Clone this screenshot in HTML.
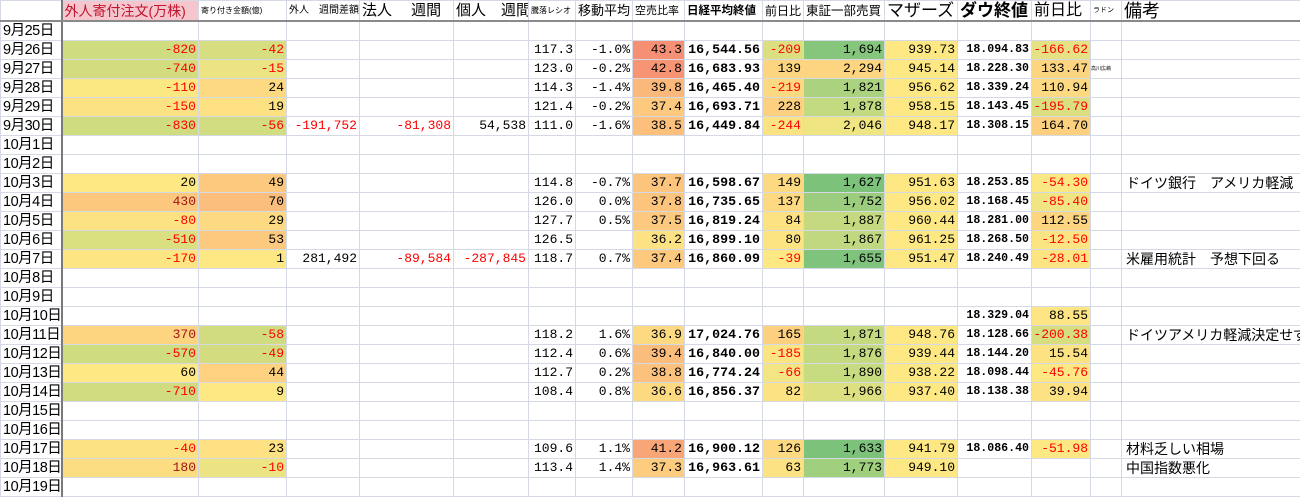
<!DOCTYPE html>
<html><head><meta charset="utf-8"><style>
body{margin:0;width:1300px;height:484px;overflow:hidden;background:#fff;font-family:"Liberation Sans","Noto Sans CJK JP",sans-serif}
table{border-collapse:collapse;table-layout:fixed;width:1300px}
td{border:1px solid #d4d9e3;height:18px;padding:0 2px 0 0;line-height:18px;text-align:right;font-family:"Liberation Mono","Noto Sans CJK JP",monospace;font-size:13px;white-space:nowrap;overflow:hidden;color:#000}
td.d{text-align:left;font-family:"Liberation Sans","Noto Sans CJK JP",sans-serif;font-size:14.5px;padding-left:2px;border-right:2px solid #7a7a7a;letter-spacing:-0.5px}
td.n{font-weight:bold;font-size:13.3px}
td.w{font-weight:bold;font-size:11.6px}
td.m{text-align:left;overflow:visible;font-family:"Liberation Sans","Noto Sans CJK JP",sans-serif;font-size:14px;padding-left:4px}
td.s{font-size:5px;text-align:left}
.r{color:#f00}.b{color:#a31515}
tr.h td{height:19px;border-bottom:2px solid #8a8a8a;font-family:"Liberation Sans","Noto Sans CJK JP",sans-serif;text-align:left;padding-left:2px;vertical-align:middle}
</style></head><body>
<table>
<colgroup><col style="width:61px"><col style="width:137px"><col style="width:88px"><col style="width:73px"><col style="width:94px"><col style="width:75px"><col style="width:47px"><col style="width:57px"><col style="width:52px"><col style="width:78px"><col style="width:41px"><col style="width:81px"><col style="width:73px"><col style="width:74px"><col style="width:59px"><col style="width:31px"><col style="width:179px"></colgroup>
<tr class="h"><td style="border-right:2px solid #7a7a7a"></td><td style="background:#f6c6ce;color:#c0142c;font-size:14px">外人寄付注文(万株)</td><td style="font-size:8px">寄り付き金額(億)</td><td style="font-size:10px">外人　週間差額</td><td style="font-size:15px">法人　 週間</td><td style="font-size:15px">個人　週間</td><td style="font-size:8px">騰落レシオ</td><td style="font-size:13px">移動平均</td><td style="font-size:11px">空売比率</td><td style="font-size:11.5px;font-weight:bold">日経平均終値</td><td style="font-size:12px">前日比</td><td style="font-size:12.5px">東証一部売買</td><td style="font-size:17px">マザーズ</td><td style="font-size:17px;font-weight:bold">ダウ終値</td><td style="font-size:16px">前日比</td><td style="font-size:7px">ラドン</td><td style="font-size:18px">備考</td></tr>
<tr><td class="d">9月25日</td><td></td><td></td><td></td><td></td><td></td><td></td><td></td><td></td><td></td><td></td><td></td><td></td><td></td><td></td><td></td><td></td></tr>
<tr><td class="d">9月26日</td><td class="r" style="background:#cfdc80">-820</td><td class="r" style="background:#d6de80">-42</td><td></td><td></td><td></td><td>117.3</td><td>-1.0%</td><td style="background:#f69075">43.3</td><td class="n">16,544.56</td><td class="r" style="background:#dcdf80">-209</td><td style="background:#86c67c">1,694</td><td style="background:#fde883">939.73</td><td class="w">18.094.83</td><td class="r" style="background:#e6e283">-166.62</td><td></td><td></td></tr>
<tr><td class="d">9月27日</td><td class="r" style="background:#d3dd80">-740</td><td class="r" style="background:#ece383">-15</td><td></td><td></td><td></td><td>123.0</td><td>-0.2%</td><td style="background:#f69474">42.8</td><td class="n">16,683.93</td><td style="background:#fdd580">139</td><td style="background:#fdd580">2,294</td><td style="background:#fde883">945.14</td><td class="w">18.228.30</td><td style="background:#fdd580">133.47</td><td class="s">高川広嶋</td><td></td></tr>
<tr><td class="d">9月28日</td><td class="r" style="background:#fce883">-110</td><td style="background:#fdd981">24</td><td></td><td></td><td></td><td>114.3</td><td>-1.4%</td><td style="background:#fbb87b">39.8</td><td class="n">16,465.40</td><td class="r" style="background:#fbd981">-219</td><td style="background:#abd37f">1,821</td><td style="background:#fde883">956.62</td><td class="w">18.339.24</td><td style="background:#fdd981">110.94</td><td></td><td></td></tr>
<tr><td class="d">9月29日</td><td class="r" style="background:#fde283">-150</td><td style="background:#fde082">19</td><td></td><td></td><td></td><td>121.4</td><td>-0.2%</td><td style="background:#fcc97e">37.4</td><td class="n">16,693.71</td><td style="background:#fdd07f">228</td><td style="background:#c2da80">1,878</td><td style="background:#fde883">958.15</td><td class="w">18.143.45</td><td class="r" style="background:#dcdf80">-195.79</td><td></td><td></td></tr>
<tr><td class="d">9月30日</td><td class="r" style="background:#cfdc80">-830</td><td class="r" style="background:#d2dc80">-56</td><td class="r">-191,752</td><td class="r">-81,308</td><td>54,538</td><td>111.0</td><td>-1.6%</td><td style="background:#fcc07c">38.5</td><td class="n">16,449.84</td><td class="r" style="background:#fbe383">-244</td><td style="background:#f0e583">2,046</td><td style="background:#fde883">948.17</td><td class="w">18.308.15</td><td style="background:#fcd07f">164.70</td><td></td><td></td></tr>
<tr><td class="d">10月1日</td><td></td><td></td><td></td><td></td><td></td><td></td><td></td><td></td><td></td><td></td><td></td><td></td><td></td><td></td><td></td><td></td></tr>
<tr><td class="d">10月2日</td><td></td><td></td><td></td><td></td><td></td><td></td><td></td><td></td><td></td><td></td><td></td><td></td><td></td><td></td><td></td><td></td></tr>
<tr><td class="d">10月3日</td><td style="background:#fde883">20</td><td style="background:#fcc97e">49</td><td></td><td></td><td></td><td>114.8</td><td>-0.7%</td><td style="background:#fcc47d">37.7</td><td class="n">16,598.67</td><td style="background:#fdd981">149</td><td style="background:#7cc27b">1,627</td><td style="background:#fde883">951.63</td><td class="w">18.253.85</td><td class="r" style="background:#fce883">-54.30</td><td></td><td class="m">ドイツ銀行　アメリカ軽減</td></tr>
<tr><td class="d">10月4日</td><td class="b" style="background:#fcc87e">430</td><td style="background:#fbbe7c">70</td><td></td><td></td><td></td><td>126.0</td><td>0.0%</td><td style="background:#fcc47d">37.8</td><td class="n">16,735.65</td><td style="background:#fdd981">137</td><td style="background:#9ccd7e">1,752</td><td style="background:#fde883">956.02</td><td class="w">18.168.45</td><td class="r" style="background:#f0e483">-85.40</td><td></td><td></td></tr>
<tr><td class="d">10月5日</td><td class="r" style="background:#fde283">-80</td><td style="background:#fdd981">29</td><td></td><td></td><td></td><td>127.7</td><td>0.5%</td><td style="background:#fcc97e">37.5</td><td class="n">16,819.24</td><td style="background:#fde283">84</td><td style="background:#c5da80">1,887</td><td style="background:#fde883">960.44</td><td class="w">18.281.00</td><td style="background:#fdd580">112.55</td><td></td><td></td></tr>
<tr><td class="d">10月6日</td><td class="r" style="background:#dadf80">-510</td><td style="background:#fcca7e">53</td><td></td><td></td><td></td><td>126.5</td><td></td><td style="background:#fde283">36.2</td><td class="n">16,899.10</td><td style="background:#fde483">80</td><td style="background:#c0d980">1,867</td><td style="background:#fde883">961.25</td><td class="w">18.268.50</td><td class="r" style="background:#fde483">-12.50</td><td></td><td></td></tr>
<tr><td class="d">10月7日</td><td class="r" style="background:#fde583">-170</td><td style="background:#fde883">1</td><td>281,492</td><td class="r">-89,584</td><td class="r">-287,845</td><td>118.7</td><td>0.7%</td><td style="background:#fcc97e">37.4</td><td class="n">16,860.09</td><td class="r" style="background:#fde883">-39</td><td style="background:#7fc37c">1,655</td><td style="background:#fde883">951.47</td><td class="w">18.240.49</td><td class="r" style="background:#fde483">-28.01</td><td></td><td class="m">米雇用統計　予想下回る</td></tr>
<tr><td class="d">10月8日</td><td></td><td></td><td></td><td></td><td></td><td></td><td></td><td></td><td></td><td></td><td></td><td></td><td></td><td></td><td></td><td></td></tr>
<tr><td class="d">10月9日</td><td></td><td></td><td></td><td></td><td></td><td></td><td></td><td></td><td></td><td></td><td></td><td></td><td></td><td></td><td></td><td></td></tr>
<tr><td class="d">10月10日</td><td></td><td></td><td></td><td></td><td></td><td></td><td></td><td></td><td></td><td></td><td></td><td></td><td class="w">18.329.04</td><td style="background:#fde583">88.55</td><td></td><td></td></tr>
<tr><td class="d">10月11日</td><td class="b" style="background:#fdd580">370</td><td class="r" style="background:#d1dc80">-58</td><td></td><td></td><td></td><td>118.2</td><td>1.6%</td><td style="background:#fdd981">36.9</td><td class="n">17,024.76</td><td style="background:#fdd07f">165</td><td style="background:#c3da80">1,871</td><td style="background:#fde883">948.76</td><td class="w">18.128.66</td><td class="r" style="background:#d6de80">-200.38</td><td></td><td class="m">ドイツアメリカ軽減決定せず</td></tr>
<tr><td class="d">10月12日</td><td class="r" style="background:#cfdc80">-570</td><td class="r" style="background:#d3dd80">-49</td><td></td><td></td><td></td><td>112.4</td><td>0.6%</td><td style="background:#fbbd7b">39.4</td><td class="n">16,840.00</td><td class="r" style="background:#fde483">-185</td><td style="background:#c3da80">1,876</td><td style="background:#fde883">939.44</td><td class="w">18.144.20</td><td style="background:#fde283">15.54</td><td></td><td></td></tr>
<tr><td class="d">10月13日</td><td style="background:#fde883">60</td><td style="background:#fdd17f">44</td><td></td><td></td><td></td><td>112.7</td><td>0.2%</td><td style="background:#fcc17c">38.8</td><td class="n">16,774.24</td><td class="r" style="background:#f3e583">-66</td><td style="background:#c7db80">1,890</td><td style="background:#fde883">938.22</td><td class="w">18.098.44</td><td class="r" style="background:#fde883">-45.76</td><td></td><td></td></tr>
<tr><td class="d">10月14日</td><td class="r" style="background:#d1dc80">-710</td><td style="background:#fde883">9</td><td></td><td></td><td></td><td>108.4</td><td>0.8%</td><td style="background:#fdd981">36.6</td><td class="n">16,856.37</td><td style="background:#fde283">82</td><td style="background:#dde080">1,966</td><td style="background:#fde883">937.40</td><td class="w">18.138.38</td><td style="background:#fde283">39.94</td><td></td><td></td></tr>
<tr><td class="d">10月15日</td><td></td><td></td><td></td><td></td><td></td><td></td><td></td><td></td><td></td><td></td><td></td><td></td><td></td><td></td><td></td><td></td></tr>
<tr><td class="d">10月16日</td><td></td><td></td><td></td><td></td><td></td><td></td><td></td><td></td><td></td><td></td><td></td><td></td><td></td><td></td><td></td><td></td></tr>
<tr><td class="d">10月17日</td><td class="r" style="background:#fde283">-40</td><td style="background:#fde183">23</td><td></td><td></td><td></td><td>109.6</td><td>1.1%</td><td style="background:#f8a577">41.2</td><td class="n">16,900.12</td><td style="background:#fdd981">126</td><td style="background:#7cc27b">1,633</td><td style="background:#fde883">941.79</td><td class="w">18.086.40</td><td class="r" style="background:#fde883">-51.98</td><td></td><td class="m">材料乏しい相場</td></tr>
<tr><td class="d">10月18日</td><td class="b" style="background:#fddd82">180</td><td class="r" style="background:#ece383">-10</td><td></td><td></td><td></td><td>113.4</td><td>1.4%</td><td style="background:#fdcc7e">37.3</td><td class="n">16,963.61</td><td style="background:#fde283">63</td><td style="background:#a0cf7e">1,773</td><td style="background:#fde883">949.10</td><td></td><td></td><td></td><td class="m">中国指数悪化</td></tr>
<tr><td class="d">10月19日</td><td></td><td></td><td></td><td></td><td></td><td></td><td></td><td></td><td></td><td></td><td></td><td></td><td></td><td></td><td></td><td></td></tr>
</table>
</body></html>
